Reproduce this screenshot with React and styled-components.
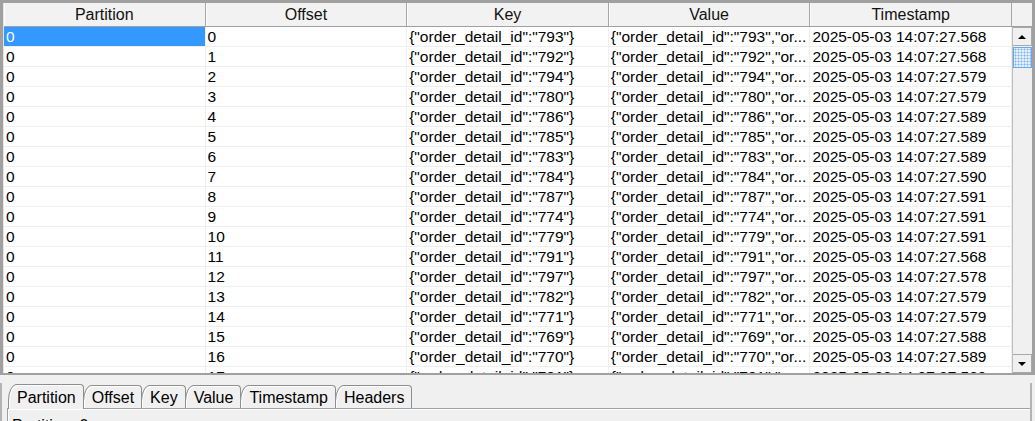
import React from 'react';
import styled, { createGlobalStyle } from 'styled-components';

const GlobalStyle = createGlobalStyle`
  html, body {
    margin: 0;
    padding: 0;
    background: #f0f0f0;
    overflow: hidden;
    font-family: "Liberation Sans", Arial, sans-serif;
  }
`;

const Window = styled.div`
  width: 1035px;
  height: 421px;
  overflow: hidden;
  background: #f0f0f0;
`;

const Pane = styled.div`
  display: flex;
  height: 370px;
  border: 3px solid #a0a0a0;
  border-bottom-width: 2px;
`;

const TableArea = styled.div`
  flex: 1;
  display: flex;
  flex-direction: column;
  border-left: 1px solid #e3e3e3;
  background: #fff;
  overflow: hidden;
`;

const HeaderRow = styled.div`
  display: grid;
  grid-template-columns: repeat(5, 1fr);
  height: 23px;
  border-bottom: 1px solid #a0a0a0;
  background: #f2f2f2;
  flex-shrink: 0;
`;

const HeaderCell = styled.div`
  display: flex;
  align-items: center;
  justify-content: center;
  font-size: 16px;
  color: #111;
  border-right: 1px solid #a6a6a6;
  box-shadow: inset 1px 0 0 #fdfdfd;
`;

const Body = styled.div`
  flex: 1;
  overflow: hidden;
`;

const Row = styled.div`
  display: grid;
  grid-template-columns: repeat(5, 1fr);
  height: 20px;
`;

const Cell = styled.div`
  height: 19px;
  line-height: 19px;
  padding-left: 2px;
  font-size: 15.5px;
  white-space: nowrap;
  overflow: hidden;
  border-right: 1px solid #efefef;
  border-bottom: 1px solid #efefef;
  background: ${({ $selected }) => ($selected ? '#3399ff' : '#fff')};
  color: ${({ $selected }) => ($selected ? '#fff' : '#000')};
`;

const ScrollColumn = styled.div`
  width: 20px;
  display: flex;
  flex-direction: column;
  flex-shrink: 0;
`;

const HeaderFiller = styled.div`
  height: 23px;
  border-bottom: 1px solid #a0a0a0;
  background: #f2f2f2;
`;

const Track = styled.div`
  flex: 1;
  display: flex;
  flex-direction: column;
  background: #f0f0f0;
  border-left: 1px solid #bdbdbd;
`;

const ArrowButton = styled.div`
  height: 19px;
  display: flex;
  align-items: center;
  justify-content: center;
  background: #f0f0f0;
  border: 1px solid #a8a8a8;
  border-left: none;
  box-sizing: border-box;
`;

const Triangle = styled.div`
  width: 0;
  height: 0;
  border-left: 4px solid transparent;
  border-right: 4px solid transparent;
  ${({ $down }) =>
    $down ? 'border-top: 4px solid #000;' : 'border-bottom: 4px solid #000;'}
`;

const Thumb = styled.div`
  height: 21px;
  margin: 1px 0 0;
  box-sizing: border-box;
  border: 1px solid #6aa8ec;
  background-color: #e3effb;
  background-image: radial-gradient(#7fb6ee 0.9px, transparent 1.1px);
  background-size: 3px 3px;
`;

const Spacer = styled.div`
  flex: 1;
`;

const Bottom = styled.div`
  margin-top: 8px;
  padding-left: 5px;
  border-left: 2px solid #b4b4b4;
  border-right: 2px solid #b4b4b4;
  margin-right: 3px;
`;

const TabBar = styled.div`
  display: flex;
  align-items: flex-end;
  height: 25px;
  padding-left: 1px;
`;

const Tab = styled.div`
  height: ${({ $active }) => ($active ? 25 : 23)}px;
  display: flex;
  align-items: center;
  padding: 1px 7px 0 8px;
  box-sizing: border-box;
  margin-right: -1px;
  margin-bottom: ${({ $active }) => ($active ? -1 : 0)}px;
  font-size: 16px;
  color: #000;
  background: #f0f0f0;
  border: 1px solid #8e8e8e;
  border-bottom: none;
  border-top-left-radius: 9px 16px;
  border-top-right-radius: 4px;
  box-shadow: inset 1px 1px 0 #fff;
  position: relative;
  z-index: ${({ $active }) => ($active ? 1 : 0)};
`;

const Panel = styled.div`
  border-top: 1px solid #a0a0a0;
  border-left: 1px solid #a0a0a0;
  box-shadow: inset 1px 1px 0 #fff;
  padding: 7px 4px 0;
  height: 40px;
  font-size: 16px;
  line-height: 19px;
`;

const rows = [
  ['793', '568'], ['792', '568'], ['794', '579'], ['780', '579'],
  ['786', '589'], ['785', '589'], ['783', '589'], ['784', '590'],
  ['787', '591'], ['774', '591'], ['779', '591'], ['791', '568'],
  ['797', '578'], ['782', '579'], ['771', '579'], ['769', '588'],
  ['770', '589'], ['781', '589'],
];

const columns = ['Partition', 'Offset', 'Key', 'Value', 'Timestamp'];
const tabs = ['Partition', 'Offset', 'Key', 'Value', 'Timestamp', 'Headers'];

export default function App() {
  return (
    <Window>
      <GlobalStyle />
      <Pane>
        <TableArea>
          <HeaderRow>
            {columns.map((c) => (
              <HeaderCell key={c}>{c}</HeaderCell>
            ))}
          </HeaderRow>
          <Body>
            {rows.map(([id, ms], i) => (
              <Row key={i}>
                <Cell $selected={i === 0}>0</Cell>
                <Cell>{i}</Cell>
                <Cell>{`{"order_detail_id":"${id}"}`}</Cell>
                <Cell>{`{"order_detail_id":"${id}","or...`}</Cell>
                <Cell>{`2025-05-03 14:07:27.${ms}`}</Cell>
              </Row>
            ))}
          </Body>
        </TableArea>
        <ScrollColumn>
          <HeaderFiller />
          <Track>
            <ArrowButton>
              <Triangle />
            </ArrowButton>
            <Thumb />
            <Spacer />
            <ArrowButton>
              <Triangle $down />
            </ArrowButton>
          </Track>
        </ScrollColumn>
      </Pane>
      <Bottom>
        <TabBar>
          {tabs.map((t, i) => (
            <Tab key={t} $active={i === 0}>{t}</Tab>
          ))}
        </TabBar>
        <Panel>Partition: 0</Panel>
      </Bottom>
    </Window>
  );
}
